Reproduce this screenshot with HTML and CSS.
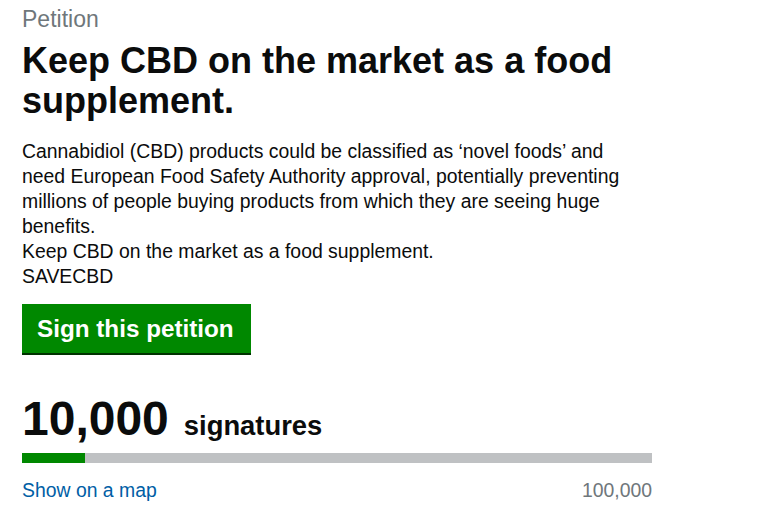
FILE: index.html
```html
<!DOCTYPE html>
<html lang="en">
<head>
<meta charset="utf-8">
<title>Petition</title>
<link rel="stylesheet" href="styles.css">
</head>
<body>
<main class="petition">
  <p class="caption">Petition</p>
  <h1 class="title">Keep CBD on the market as a food supplement.</h1>
  <div class="body">
    <p>Cannabidiol (CBD) products could be classified as ‘novel foods’ and need European Food Safety Authority approval, potentially preventing millions of people buying products from which they are seeing huge benefits.</p>
    <p>Keep CBD on the market as a food supplement.</p>
    <p>SAVECBD</p>
  </div>
  <a class="button" href="#">Sign this petition</a>
  <div class="count">
    <span class="count-number">10,000</span><span class="count-label">signatures</span>
  </div>
  <div class="progress"><div class="progress-fill" style="width:10%"></div></div>
  <div class="meta">
    <a class="map-link" href="#">Show on a map</a>
    <span class="threshold">100,000</span>
  </div>
</main>
</body>
</html>
```

FILE: styles.css
```css
* { box-sizing: border-box; }
html, body { margin: 0; padding: 0; background: #fff; }
body {
  font-family: "Liberation Sans", Arial, sans-serif;
  color: #0b0c0c;
}
.petition {
  width: 630px;
  margin-left: 22px;
  padding-top: 4px;
}
.caption {
  margin: 0;
  font-size: 23px;
  line-height: 30px;
  color: #6f777b;
}
.title {
  margin: 7px 0 0;
  font-size: 36px;
  line-height: 40px;
  font-weight: 700;
}
.body {
  margin-top: 18px;
  width: 610px;
  font-size: 19.4px;
  line-height: 25px;
}
.body p { margin: 0; }
.button {
  display: inline-block;
  margin-top: 15px;
  padding: 10px 17px 9px 15px;
  background: #008800;
  color: #fff;
  font-size: 24.25px;
  line-height: 30px;
  font-weight: 700;
  text-decoration: none;
  box-shadow: 0 2px 0 #003300;
}
.count {
  margin-top: 42px;
  height: 48px;
  line-height: 48px;
  font-weight: 700;
}
.count-number { font-size: 48px; }
.count-label { font-size: 27.4px; margin-left: 15px; }
.progress {
  margin-top: 10px;
  height: 10px;
  background: #bfc1c3;
}
.progress-fill {
  height: 100%;
  background: #008800;
}
.meta {
  margin-top: 15px;
  display: flex;
  justify-content: space-between;
  font-size: 19.4px;
  line-height: 25px;
}
.map-link { color: #005ea5; text-decoration: none; }
.threshold { color: #6f777b; }
```
